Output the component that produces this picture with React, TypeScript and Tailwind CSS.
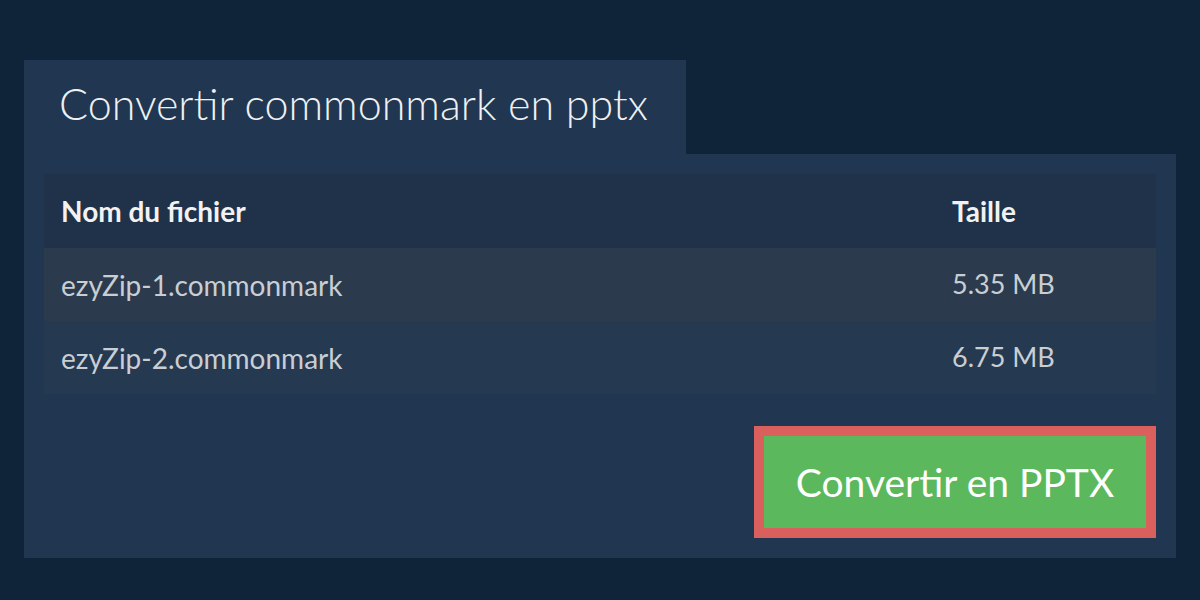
const files = [
  { name: "ezyZip-1.commonmark", size: "5.35 MB", bg: "bg-[#2b3b4d]" },
  { name: "ezyZip-2.commonmark", size: "6.75 MB", bg: "bg-[#253951]" },
];

export default function App() {
  return (
    <div
      className="w-[1200px] h-[600px] bg-[#0f2339] px-[24px] pt-[60px]"
      style={{ fontFamily: "Lato, 'Open Sans', sans-serif" }}
    >
      <div className="flex">
        <div className="w-[662px] h-[94px] bg-[#213650] pl-[35px] pt-[16px]">
          <h1 className="text-[43px] font-light text-[#eef0f2] leading-[56px]">
            Convertir commonmark en pptx
          </h1>
        </div>
      </div>
      <div className="w-[1152px] bg-[#213650] px-[20px] pt-[20px] pb-[20px]">
        <table className="w-full border-collapse">
          <thead>
            <tr className="bg-[#1f3249] h-[74px]">
              <th className="w-[891px] pl-[17px] text-left text-[28px] font-bold text-[#f2f2f2]">
                Nom du fichier
              </th>
              <th className="pl-[17px] text-left text-[28px] font-bold text-[#f2f2f2]">
                Taille
              </th>
            </tr>
          </thead>
          <tbody>
            {files.map((f) => (
              <tr key={f.name} className={`${f.bg} h-[73px]`}>
                <td className="pl-[17px] text-[28px] text-[#c9ced4]">
                  {f.name}
                </td>
                <td className="pl-[17px] text-[27px] text-[#c9ced4]">
                  {f.size}
                </td>
              </tr>
            ))}
          </tbody>
        </table>
        <div className="flex justify-end mt-[32px]">
          <button className="w-[402px] h-[112px] border-[10px] border-[#d9605c] bg-[#5cb85c] text-white text-[39px] font-normal">
            Convertir en PPTX
          </button>
        </div>
      </div>
    </div>
  );
}
